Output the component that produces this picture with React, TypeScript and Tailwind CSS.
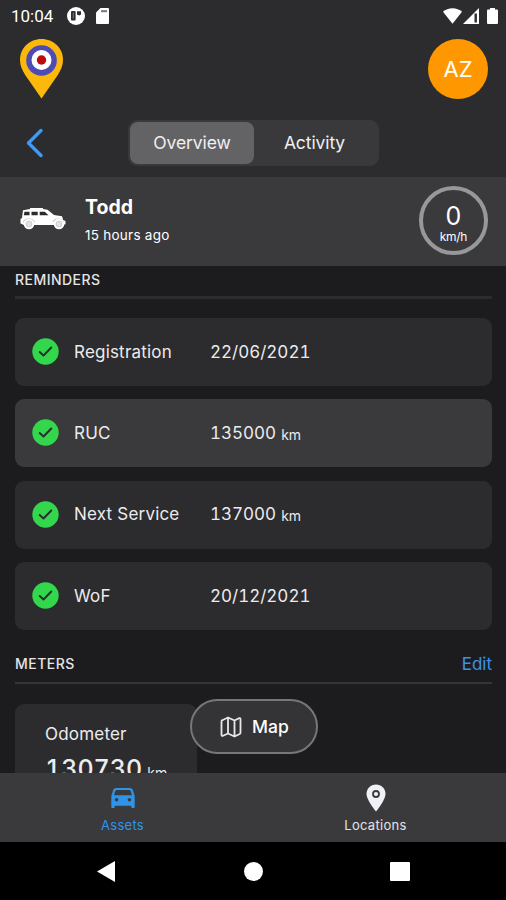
import type { ReactNode } from "react";

interface Reminder {
  label: string;
  value: string;
  unit?: string;
  active?: boolean;
}

const reminders: Reminder[] = [
  { label: "Registration", value: "22/06/2021" },
  { label: "RUC", value: "135000", unit: "km", active: true },
  { label: "Next Service", value: "137000", unit: "km" },
  { label: "WoF", value: "20/12/2021" },
];

function StatusBar() {
  return (
    <div className="flex h-8 items-center justify-between pr-2 pl-[11px] text-white">
      <div className="flex items-center">
        <span className="w-14 font-['Roboto',sans-serif] text-[17px] leading-8">10:04</span>
        <svg className="h-[18px] w-[18px]" viewBox="0 0 18 18">
          <circle cx="9" cy="9" fill="white" r="9" />
          <rect fill="#2c2c2e" height="9.5" rx="1" width="4.6" x="4" y="4" />
          <path d="M6.3 5.5v6" stroke="#77777a" strokeWidth="1" />
          <path d="M10 4.3h4v3.2l-1.8 1-2.2-1z" fill="#2c2c2e" />
        </svg>
        <svg className="ml-[11px] h-4 w-[13px]" viewBox="0 0 13 16">
          <path d="M4.5 0H12a1 1 0 0 1 1 1v14a1 1 0 0 1-1 1H1a1 1 0 0 1-1-1V4.5z" fill="white" />
          <path d="M5 3.2h6" stroke="#77777a" strokeWidth="2" />
        </svg>
      </div>
      <div className="flex items-center">
        <svg className="h-4 w-[19px]" viewBox="0 0 19 16">
          <path d="M9.5 15.7 0 3.8C2.5 1.4 5.8.2 9.5.2s7 1.2 9.5 3.6z" fill="white" />
        </svg>
        <svg className="ml-[1px] h-4 w-4" viewBox="0 0 16 16">
          <path d="M16 0v16H0z" fill="white" />
          <path d="M12.7 5.5v9" stroke="#2c2c2e" strokeWidth="2.4" />
        </svg>
        <svg className="ml-2 h-4 w-[11px]" viewBox="0 0 11 16">
          <path d="M3 0h5v1.5h2a1 1 0 0 1 1 1V15a1 1 0 0 1-1 1H1a1 1 0 0 1-1-1V2.5a1 1 0 0 1 1-1h2z" fill="white" />
        </svg>
      </div>
    </div>
  );
}

function Logo() {
  return (
    <svg className="h-[60px] w-[43px]" viewBox="0 0 43 60">
      <path d="M21.5 0C9.5 0 0 9.2 0 20.7c0 5.8 2.2 10.3 5.2 15.3L21.5 59.5 37.8 36c3-5 5.2-9.5 5.2-15.3C43 9.2 33.5 0 21.5 0z" fill="#fdb90b" />
      <circle cx="21.5" cy="21.5" fill="#4f4bb5" r="15.3" />
      <circle cx="21.5" cy="21" fill="white" r="10" />
      <circle cx="21.5" cy="21" fill="#bd0a0d" r="4.7" />
    </svg>
  );
}

function JeepIcon() {
  return (
    <svg className="mb-1 h-6 w-[46px]" viewBox="0 0 46 24">
      <path d="M3 3.2 10 2V1h13v1l4.5.8L34 8l8 1.300 1.200 3.700 2.300 1v3.200L42 18H4l-3.500-1.500V12L2 11z" fill="white" />
      <path d="M4.500 4.700h5v3.600H3.800zM11.500 4.700h6.200v3.600h-6.200zM19.700 4.700h5l3.800 3.600h-8.800z" fill="#2b2b2d" />
      <path d="M3.300 15c1-4 10-4 11.200 0M33 15c1-4 9-4 11 0" fill="none" stroke="#a0a0a2" strokeWidth="0.7" />
      <circle cx="9" cy="17" fill="white" r="5.3" />
      <circle cx="39" cy="17" fill="white" r="5.3" />
      <circle cx="9" cy="17" fill="#e2e2e2" r="3" stroke="#bbb" strokeWidth="0.6" />
      <circle cx="39" cy="17" fill="#e2e2e2" r="3" stroke="#bbb" strokeWidth="0.6" />
    </svg>
  );
}

function Header() {
  return (
    <header className="h-[177px] shrink-0 bg-[#2c2c2e]">
      <StatusBar />
      <div className="flex items-start justify-between pt-[7px] pr-[18px] pl-5">
        <Logo />
        <div className="flex h-[60px] w-[60px] items-center justify-center rounded-full bg-[#ff9800] text-[22px] text-white">
          AZ
        </div>
      </div>
      <div className="mt-[21px] flex items-center pl-[25px]">
        <svg className="h-[30px] w-[19px]" fill="none" viewBox="0 0 19 30">
          <path d="M16 2.5 3.5 15 16 27.5" stroke="#3d9bf5" strokeLinecap="round" strokeLinejoin="round" strokeWidth="3.4" />
        </svg>
        <div className="ml-[84px] flex h-[46px] w-[251px] rounded-[9px] bg-[#39393b] p-[2px] text-[#f0f0f2] text-[17.5px]">
          <div className="flex w-[124px] items-center justify-center rounded-lg bg-[#636366] tracking-[-0.1px]">Overview</div>
          <div className="flex flex-1 items-center justify-center pr-[2px] tracking-[-0.1px]">Activity</div>
        </div>
      </div>
    </header>
  );
}

function VehicleBar() {
  return (
    <div className="flex h-[89px] shrink-0 items-center bg-[#3a3a3c] pr-[18px] pb-[2px] pl-5 text-white">
      <JeepIcon />
      <div className="ml-[19px] flex-1">
        <h1 className="font-bold text-[19.5px] leading-7">Todd</h1>
        <p className="text-[13.5px] leading-7 tracking-[0.25px]">15 hours ago</p>
      </div>
      <div className="flex h-[69px] w-[69px] flex-col items-center rounded-full border-4 border-[#98989b] pt-[13px]">
        <span className="text-[25px] leading-[26px]">0</span>
        <span className="text-[12px] leading-[16px] tracking-[-0.3px]">km/h</span>
      </div>
    </div>
  );
}

function ReminderCard({ label, value, unit, active }: Reminder) {
  return (
    <li className={`flex h-[68px] items-center rounded-[9px] pl-[17px] text-[#ebebed] text-[17px] ${active ? "bg-[#3a3a3c]" : "bg-[#2c2c2e]"}`}>
      <svg className="mb-px h-[27px] w-[27px]" fill="none" viewBox="0 0 27 27">
        <circle cx="13.5" cy="13.5" fill="#32d74b" r="13.2" />
        <path d="m7.7 14 3.8 3.5 7.8-8" stroke="#2c2c2e" strokeLinecap="round" strokeLinejoin="round" strokeWidth="1.9" />
      </svg>
      <span className="ml-[15px] w-[136px] pt-px tracking-[0.2px]">{label}</span>
      <span className="pt-px tabular-nums">{value}</span>
      {unit && <span className="ml-[5px] pt-[2px] text-[14px]">{unit}</span>}
    </li>
  );
}

function TabItem({ label, active, children }: { label: string; active?: boolean; children: ReactNode }) {
  return (
    <div className={`flex flex-col items-center pt-[9px] text-[13px] ${active ? "text-[#2e94ea]" : "text-[#e4e4e8]"}`}>
      <div className="flex h-[32px] items-center">{children}</div>
      <span className="leading-[22px] tracking-[0.3px]">{label}</span>
    </div>
  );
}

function TabBar() {
  return (
    <nav className="grid h-[69px] shrink-0 grid-cols-[245px_261px] bg-[#3a3a3c]">
      <TabItem active label="Assets">
        <svg className="h-5 w-6" viewBox="0 0 24 20">
          <path
            clipRule="evenodd"
            d="M2 2.800Q2.500 0 5.500 0h13Q21.500 0 22 2.800L23.700 8v10.800c0 .8-.4 1.200-1.200 1.200h-1c-.8 0-1.200-.4-1.200-1.200v-1H3.700v1c0 .8-.4 1.200-1.200 1.200h-1C.700 20 .3 19.600.3 18.800V8zM6 2Q4.600 2 4.300 3L3 7.300h18L19.700 3Q19.400 2 18 2zM5.600 10a1.800 1.800 0 1 0 0 3.600 1.800 1.800 0 0 0 0-3.600zm12.800 0a1.800 1.800 0 1 0 0 3.600 1.800 1.800 0 0 0 0-3.600z"
            fill="currentColor"
            fillRule="evenodd"
          />
        </svg>
      </TabItem>
      <TabItem label="Locations">
        <svg className="h-7 w-5" viewBox="0 0 20 28">
          <path d="M10 .5C4.7.5.5 4.700.5 9.800.5 16.500 10 27.500 10 27.500S19.500 16.500 19.500 9.800C19.500 4.700 15.300.5 10 .5z" fill="#f0f0f7" />
          <circle cx="10" cy="10" fill="none" r="3" stroke="#3a3a3c" strokeWidth="1.8" />
        </svg>
      </TabItem>
    </nav>
  );
}

function SystemNav() {
  return (
    <div className="flex h-[58px] shrink-0 items-center justify-between bg-black pr-[96px] pl-[97px]">
      <svg className="h-[21px] w-[18px]" viewBox="0 0 18 21">
        <path d="M18 0v21L0 10.5z" fill="white" />
      </svg>
      <div className="ml-[2px] h-[19px] w-[19px] rounded-full bg-white" />
      <div className="h-[19px] w-5 rounded-[1px] bg-white" />
    </div>
  );
}

export default function App() {
  return (
    <div className="flex h-[900px] w-[506px] flex-col overflow-hidden bg-[#1c1c1e] font-['Inter',sans-serif]">
      <Header />
      <VehicleBar />
      <main className="relative min-h-0 flex-1 overflow-hidden pr-[14px] pl-[15px]">
        <h2 className="h-[30px] font-medium text-[#e5e5e7] text-[14px] leading-[28px] tracking-[0.45px]">REMINDERS</h2>
        <div className="h-[3px] bg-[#2c2c2e]" />
        <ul className="mt-[19px] flex flex-col gap-[13.3px]">
          {reminders.map((item) => (
            <ReminderCard key={item.label} {...item} />
          ))}
        </ul>
        <div className="mt-[20px] flex h-[34px] justify-between border-[#353537] border-b-2">
          <h2 className="font-medium text-[#e5e5e7] text-[14px] leading-[28px] tracking-[0.5px]">METERS</h2>
          <span className="text-[#3c93e6] text-[17px] leading-[28px]">Edit</span>
        </div>
        <div className="mt-5 h-[130px] w-[182px] rounded-[9px] bg-[#2c2c2e] pt-[17px] pl-[30px] text-[#ededef]">
          <p className="text-[17px] leading-[26px] tracking-[0.2px]">Odometer</p>
          <p className="mt-[6px] flex items-baseline font-medium text-[25px] tabular-nums leading-8">
            130730<span className="ml-[5px] font-normal text-[14px]">km</span>
          </p>
        </div>
        <button
          className="absolute top-[433px] left-[190px] flex h-[55px] w-[128px] items-center rounded-full border-2 border-[#777779] bg-[#343436] pt-px pl-[28px] font-medium text-[17.5px] text-white"
          type="button"
        >
          <svg className="mr-[10px] h-[22px] w-[22px]" fill="none" viewBox="0 0 22 22">
            <path
              d="M1.500 5.500q0-1 .8-1.300L8 1.500l6.500 3 4.500-2.300q1.500-.5 1.500 1v13.500q0 1-.8 1.300L14.500 20.500 8 17.500l-5 2.300q-1.500.6-1.500-1zM8 1.500v16M14.500 4.500v16"
              stroke="#e8e8ea"
              strokeLinejoin="round"
              strokeWidth="1.8"
            />
          </svg>
          Map
        </button>
      </main>
      <TabBar />
      <SystemNav />
    </div>
  );
}
